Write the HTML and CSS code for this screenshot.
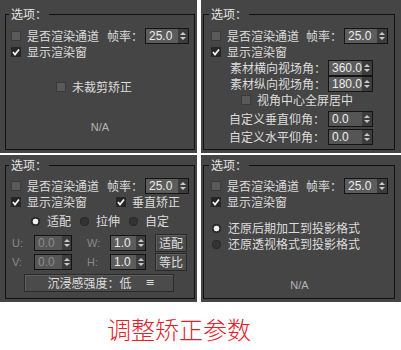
FILE: index.html
```html
<!DOCTYPE html>
<html lang="zh-CN">
<head>
<meta charset="utf-8">
<link rel="stylesheet" href="styles.css">
</head>
<body>
<div class="sheet">
  <section class="panel p-left p-top">
    <fieldset class="group">
      <legend>选项：</legend>
      <div class="row r-first">
        <span class="cb"></span><span class="lbl">是否渲染通道</span>
        <span class="fps">帧率：</span>
        <span class="spin spin-fps"><span class="val">25.0</span><span class="arr"><i class="up"></i><i class="dn"></i></span></span>
      </div>
      <div class="row r-second">
        <span class="cb cb-on"><svg viewBox="0 0 10 10" width="10" height="10"><polyline points="2,5 4,7.5 8,2.5" fill="none" stroke="#f2f2f2" stroke-width="1.8"/></svg></span><span class="lbl">显示渲染窗</span>
      </div>
      <div class="row r-crop">
        <span class="cb"></span><span class="lbl">未裁剪矫正</span>
      </div>
      <div class="na na-top">N/A</div>
    </fieldset>
  </section>

  <section class="panel p-right p-top">
    <fieldset class="group g-right">
      <legend>选项：</legend>
      <div class="row r-first">
        <span class="cb"></span><span class="lbl">是否渲染通道</span>
        <span class="fps">帧率：</span>
        <span class="spin spin-fps"><span class="val">25.0</span><span class="arr"><i class="up"></i><i class="dn"></i></span></span>
      </div>
      <div class="row r-second">
        <span class="cb cb-on"><svg viewBox="0 0 10 10" width="10" height="10"><polyline points="2,5 4,7.5 8,2.5" fill="none" stroke="#f2f2f2" stroke-width="1.8"/></svg></span><span class="lbl">显示渲染窗</span>
      </div>
      <div class="row r-field r-fov">
        <span class="flabel">素材横向视场角：</span>
        <span class="spin spin-fov"><span class="val">360.0</span><span class="arr"><i class="up"></i><i class="dn"></i></span></span>
      </div>
      <div class="row r-field r-fov">
        <span class="flabel">素材纵向视场角：</span>
        <span class="spin spin-fov"><span class="val">180.0</span><span class="arr"><i class="up"></i><i class="dn"></i></span></span>
      </div>
      <div class="row r-center">
        <span class="cb"></span><span class="lbl">视角中心全屏居中</span>
      </div>
      <div class="row r-field r-ang r-ang1">
        <span class="flabel">自定义垂直仰角：</span>
        <span class="spin spin-fov spin-zero"><span class="val">0.0</span><span class="arr"><i class="up"></i><i class="dn"></i></span></span>
      </div>
      <div class="row r-field r-ang r-ang2">
        <span class="flabel">自定义水平仰角：</span>
        <span class="spin spin-fov spin-zero"><span class="val">0.0</span><span class="arr"><i class="up"></i><i class="dn"></i></span></span>
      </div>
    </fieldset>
  </section>

  <section class="panel p-left p-bottom">
    <fieldset class="group g-bottom">
      <legend>选项：</legend>
      <div class="row r-first">
        <span class="cb"></span><span class="lbl">是否渲染通道</span>
        <span class="fps">帧率：</span>
        <span class="spin spin-fps"><span class="val">25.0</span><span class="arr"><i class="up"></i><i class="dn"></i></span></span>
      </div>
      <div class="row r-second">
        <span class="cb cb-on"><svg viewBox="0 0 10 10" width="10" height="10"><polyline points="2,5 4,7.5 8,2.5" fill="none" stroke="#f2f2f2" stroke-width="1.8"/></svg></span><span class="lbl">显示渲染窗</span>
        <span class="vert">
          <span class="cb cb-on"><svg viewBox="0 0 10 10" width="10" height="10"><polyline points="2,5 4,7.5 8,2.5" fill="none" stroke="#f2f2f2" stroke-width="1.8"/></svg></span><span class="lbl">垂直矫正</span>
        </span>
      </div>
      <div class="row r-radios">
        <span class="opt"><span class="rd rd-on"></span><span class="lbl">适配</span></span>
        <span class="opt"><span class="rd"></span><span class="lbl">拉伸</span></span>
        <span class="opt"><span class="rd"></span><span class="lbl">自定</span></span>
      </div>
      <div class="row r-uv">
        <span class="axis">U:</span>
        <span class="spin spin-uv spin-off"><span class="val">0.0</span><span class="arr"><i class="up"></i><i class="dn"></i></span></span>
        <span class="axis axis-w">W:</span>
        <span class="spin spin-wh"><span class="val">1.0</span><span class="arr"><i class="up"></i><i class="dn"></i></span></span>
        <span class="btn btn-sm">适配</span>
      </div>
      <div class="row r-uv r-v">
        <span class="axis">V:</span>
        <span class="spin spin-uv spin-off"><span class="val">0.0</span><span class="arr"><i class="up"></i><i class="dn"></i></span></span>
        <span class="axis axis-w">H:</span>
        <span class="spin spin-wh"><span class="val">1.0</span><span class="arr"><i class="up"></i><i class="dn"></i></span></span>
        <span class="btn btn-sm">等比</span>
      </div>
      <div class="row r-long">
        <span class="btn btn-long"><span>沉浸感强度：低</span><span class="menu">≡</span></span>
      </div>
    </fieldset>
  </section>

  <section class="panel p-right p-bottom">
    <fieldset class="group g-right g-bottom">
      <legend>选项：</legend>
      <div class="row r-first">
        <span class="cb"></span><span class="lbl">是否渲染通道</span>
        <span class="fps">帧率：</span>
        <span class="spin spin-fps"><span class="val">25.0</span><span class="arr"><i class="up"></i><i class="dn"></i></span></span>
      </div>
      <div class="row r-second">
        <span class="cb cb-on"><svg viewBox="0 0 10 10" width="10" height="10"><polyline points="2,5 4,7.5 8,2.5" fill="none" stroke="#f2f2f2" stroke-width="1.8"/></svg></span><span class="lbl">显示渲染窗</span>
      </div>
      <div class="row r-proj r-proj1">
        <span class="rd rd-on"></span><span class="lbl">还原后期加工到投影格式</span>
      </div>
      <div class="row r-proj">
        <span class="rd"></span><span class="lbl">还原透视格式到投影格式</span>
      </div>
      <div class="na na-bottom">N/A</div>
    </fieldset>
  </section>
</div>
<p class="caption">调整矫正参数</p>
</body>
</html>
```
FILE: styles.css
```css
* { box-sizing: border-box; }
html, body { margin: 0; padding: 0; background: #ffffff; }
body {
  font-family: "Noto Sans CJK SC", "Noto Sans", sans-serif;
  font-size: 12px;
  color: #dcdcdc;
}

.sheet {
  display: grid;
  grid-template-columns: 197px 200px;
  grid-template-rows: 153px 147px;
  column-gap: 4px;
  row-gap: 2px;
}

.panel {
  background: #454545;
  display: flex;
  flex-direction: column;
}
.p-top { padding-top: 7px; padding-bottom: 3px; }
.p-bottom { padding-top: 3px; padding-bottom: 3px; }
.p-left { padding-left: 5px; padding-right: 2px; }
.p-right { padding-left: 2px; padding-right: 6px; }

.group {
  flex: 1;
  margin: 0;
  min-width: 0;
  border: 1px solid #111111;
  padding: 7px 5px 0 5px;
  display: flex;
  flex-direction: column;
}
.g-right { padding-left: 7px; padding-right: 6px; }
.g-bottom { padding-top: 6px; }

legend {
  padding: 0 2px;
  margin-left: -2px;
  line-height: 14px;
  font-size: 12px;
  color: #e4e4e4;
}

.row {
  display: flex;
  align-items: center;
  height: 16px;
  line-height: 14px;
  white-space: nowrap;
}

.cb {
  width: 10px;
  height: 10px;
  flex: none;
  background: #5a5a5a;
  box-shadow: inset 0 0 0 1px #3a3a3a;
  margin-right: 6px;
  display: flex;
}
.cb-on { background: #262626; box-shadow: none; }
.cb svg { display: block; }

.fps { margin-left: auto; margin-right: 2px; }

.spin {
  display: flex;
  height: 16px;
  flex: none;
  border: 1px solid #141414;
  background: #3c3c3c;
}
.val {
  flex: 1;
  background: #5c5c5c;
  color: #ececec;
  font-family: "Liberation Sans", Arial, sans-serif;
  font-size: 12px;
  line-height: 14px;
  padding-left: 3px;
}
.arr {
  width: 10px;
  flex: none;
  display: flex;
  flex-direction: column;
  align-items: center;
  justify-content: center;
  gap: 2px;
}
.up, .dn {
  display: block;
  width: 0;
  height: 0;
  border-left: 3px solid transparent;
  border-right: 3px solid transparent;
}
.up { border-bottom: 3px solid #c8c8c8; }
.dn { border-top: 3px solid #c8c8c8; }

.spin-fps { width: 44px; }
.spin-fov { width: 45px; }
.spin-zero .val { background: #555555; }
.spin-uv { width: 38px; }
.spin-wh { width: 36px; }
.spin-uv .arr, .spin-wh .arr { width: 9px; }
.spin-off .val { color: #8c8c8c; background: #565656; }

/* top-left */
.r-crop { margin-top: 19px; padding-left: 45px; }
.na {
  text-align: center;
  font-family: "Liberation Sans", Arial, sans-serif;
  font-size: 11px;
  line-height: 14px;
  color: #b4b4b4;
}
.na-top { margin-top: 25px; }
.na-bottom { margin-top: 26px; }

/* top-right */
.r-field { justify-content: flex-start; }
.flabel { flex: none; }
.r-fov { padding-left: 19px; }
.r-fov .flabel { width: 98px; }
.r-center { padding-left: 30px; }
.r-ang { padding-left: 18px; }
.r-ang .flabel { width: 99px; }
.r-ang1 { margin-top: 3px; }
.r-ang2 { margin-top: 2px; }

/* bottom-left */
.vert { display: flex; align-items: center; margin-left: 29px; }
.r-radios { margin-top: 3px; padding-left: 20px; gap: 9px; }
.opt { display: flex; align-items: center; }
.rd {
  width: 9px;
  height: 9px;
  flex: none;
  border-radius: 50%;
  background: #333333;
  box-shadow: inset 0 0 0 1px #2a2a2a;
  margin-right: 7px;
}
.rd-on {
  background: radial-gradient(circle, #f0f0f0 0 2.6px, #2a2a2a 3.2px);
}
.r-uv { margin-top: 5px; height: 18px; }
.r-v { margin-top: 1px; }
.axis {
  width: 23px;
  flex: none;
  padding-left: 1px;
  font-family: "Liberation Sans", Arial, sans-serif;
  font-size: 11px;
  color: #8a8a8a;
}
.axis-w { width: 24px; margin-left: 14px; }
.btn {
  display: flex;
  align-items: center;
  justify-content: center;
  height: 18px;
  background: #4b4b4b;
  border: 1px solid #2a2a2a;
  box-shadow: inset 1px 1px 0 #5e5e5e;
  color: #dedede;
  line-height: 14px;
}
.btn-sm { width: 32px; margin-left: 9px; }
.r-long { margin-top: 3px; height: 18px; padding-left: 13px; }
.btn-long { width: 150px; gap: 14px; padding-left: 4px; }
.menu { font-family: "DejaVu Sans", sans-serif; font-size: 11px; }

/* bottom-right */
.r-proj .rd { margin-left: 1px; margin-right: 7px; }
.r-proj1 { margin-top: 10px; }

.caption {
  margin: 14px 0 0 107px;
  font-family: "Noto Sans CJK SC", sans-serif;
  font-size: 24px;
  line-height: 26px;
  color: #e3202a;
  font-weight: 300;
}
```
